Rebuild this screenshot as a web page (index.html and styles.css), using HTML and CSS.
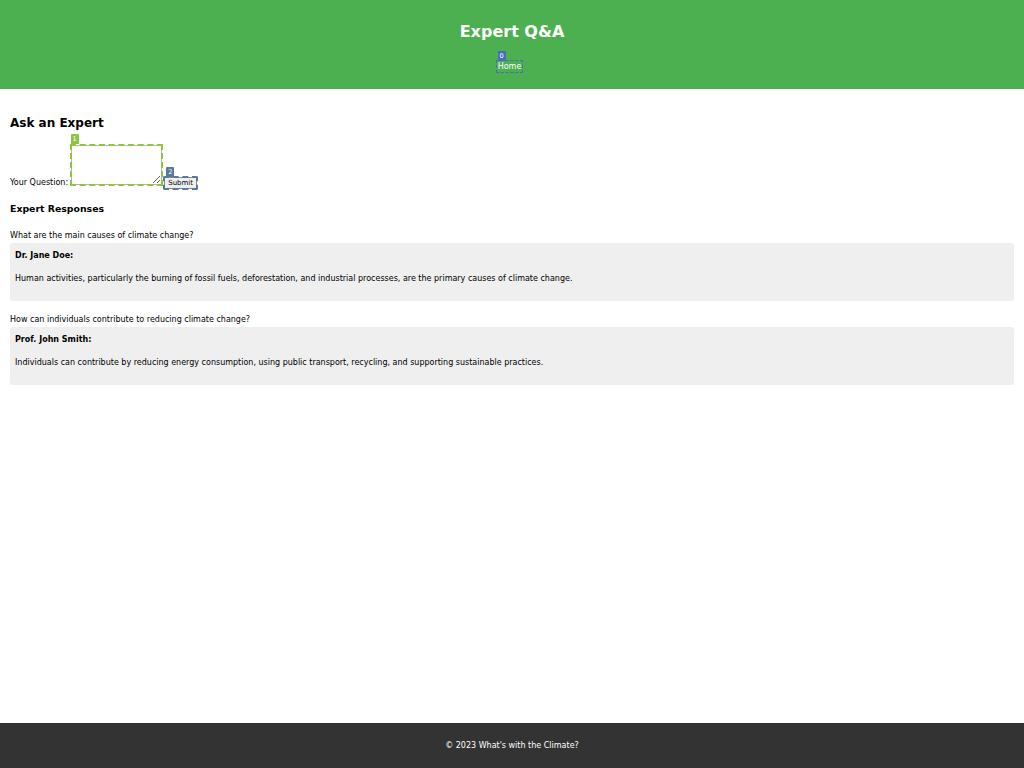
FILE: index.html
```html
<!DOCTYPE html>
<html lang="en">
<head>
<meta charset="utf-8">
<title>Expert Q&amp;A</title>
<link rel="stylesheet" href="styles.css">
</head>
<body>
<header class="site-header">
  <h1 class="site-title">Expert Q&amp;A</h1>
  <nav class="site-nav">
    <ul class="nav-list">
      <li class="nav-item"><a class="nav-link mark mark-0" href="#">Home<span class="badge badge-0">0</span></a></li>
    </ul>
  </nav>
</header>
<main class="content">
  <section class="ask">
    <h2 class="ask-title">Ask an Expert</h2>
    <form class="ask-form">
      <label class="ask-label" for="question">Your Question:</label>
      <span class="field"><textarea id="question" class="ask-input mark mark-1"></textarea><span class="badge badge-1">1</span></span>
      <button class="ask-submit mark mark-2" type="button">Submit<span class="badge badge-2">2</span></button>
    </form>
  </section>
  <section class="responses">
    <h3 class="responses-title">Expert Responses</h3>
    <article class="qa">
      <p class="qa-question">What are the main causes of climate change?</p>
      <div class="qa-answer">
        <h4 class="expert-name">Dr. Jane Doe:</h4>
        <p class="answer-text">Human activities, particularly the burning of fossil fuels, deforestation, and industrial processes, are the primary causes of climate change.</p>
      </div>
    </article>
    <article class="qa">
      <p class="qa-question">How can individuals contribute to reducing climate change?</p>
      <div class="qa-answer">
        <h4 class="expert-name">Prof. John Smith:</h4>
        <p class="answer-text">Individuals can contribute by reducing energy consumption, using public transport, recycling, and supporting sustainable practices.</p>
      </div>
    </article>
  </section>
</main>
<footer class="site-footer">
  <p class="footer-text">© 2023 What's with the Climate?</p>
</footer>
</body>
</html>
```

FILE: styles.css
```css
html, body {
  margin: 0;
  padding: 0;
}

body {
  font-family: "DejaVu Sans", "Liberation Sans", sans-serif;
  font-size: 8px;
  line-height: normal;
  color: #000;
  background: #fff;
  display: flex;
  flex-direction: column;
  min-height: 100vh;
}

/* Header */
.site-header {
  background: #4caf50;
  color: #fff;
  text-align: center;
  padding: 11.5px 10px 10px;
}

.site-title {
  font-size: 16px;
  font-weight: bold;
  margin: 10.7px 0 0;
}

.site-nav {
  padding: 21.1px 0 7.8px;
}

.nav-list {
  list-style: none;
  margin: 0;
  padding: 0;
}

.nav-item {
  display: inline;
  margin-right: 5px;
}

.nav-link {
  color: #fff;
  text-decoration: none;
  padding: 1px 1px;
}

/* Annotation marks */
.mark {
  position: relative;
  outline-style: dashed;
}

.mark-0 {
  outline-width: 1px;
  outline-color: #4a6cc0;
  outline-offset: 0;
}

.mark-1 {
  outline-width: 2px;
  outline-color: #8cc63e;
  outline-offset: -1px;
}

.mark-2 {
  outline-width: 2px;
  outline-color: #5b7a9b;
  outline-offset: -1px;
}

.badge {
  position: absolute;
  left: 1px;
  bottom: 100%;
  min-width: 8px;
  height: 10px;
  line-height: 10px;
  padding: 0 1px;
  box-sizing: border-box;
  font-family: "DejaVu Sans", sans-serif;
  font-size: 6.5px;
  font-weight: normal;
  color: #fff;
  text-align: center;
  border-radius: 1px 1px 0 0;
}

.badge-0 {
  background: #4a6cc0;
  left: 1px;
}

.badge-1 {
  background: #8cc63e;
  left: 0;
  bottom: calc(100% + 1px);
}

.badge-2 {
  background: #5b7a9b;
  left: 1px;
  bottom: calc(100% + 1px);
}

/* Main */
.content {
  flex: 1;
  padding: 0 10px;
}

.ask-title {
  font-size: 12px;
  font-weight: bold;
  margin: 26.6px 0 15.4px;
}

.ask-form {
  margin: 0;
}

.ask-label {
  font-size: 8px;
}

.field {
  position: relative;
  display: inline-block;
}

.ask-input {
  box-sizing: border-box;
  width: 91px;
  height: 40px;
  margin: 0;
  padding: 1px;
  border: 1px solid #b5b5b5;
  font-family: "DejaVu Sans Mono", monospace;
  font-size: 6.5px;
  background: #fff;
}

.ask-submit {
  font-family: "DejaVu Sans", sans-serif;
  font-size: 7px;
  line-height: normal;
  padding: 1px 3px;
  margin: 0;
  border: 1px solid #8a8a8a;
  border-radius: 1px;
  background: #efefef;
  color: #000;
}

.responses-title {
  font-size: 9.36px;
  font-weight: bold;
  margin: 14.3px 0 16.4px;
}

.qa + .qa {
  margin-top: 14px;
}

.qa-question {
  margin: 0 0 3.2px;
}

.qa-answer {
  background: #efefef;
  border-radius: 2.5px;
  padding: 8px 5px;
}

.expert-name {
  font-size: 8px;
  font-weight: bold;
  margin: 0 0 14.1px;
}

.answer-text {
  margin: 0 0 10px;
}

/* Footer */
.site-footer {
  background: #333;
  color: #fff;
  text-align: center;
  padding: 10px;
}

.footer-text {
  margin: 8px 0;
}
```
